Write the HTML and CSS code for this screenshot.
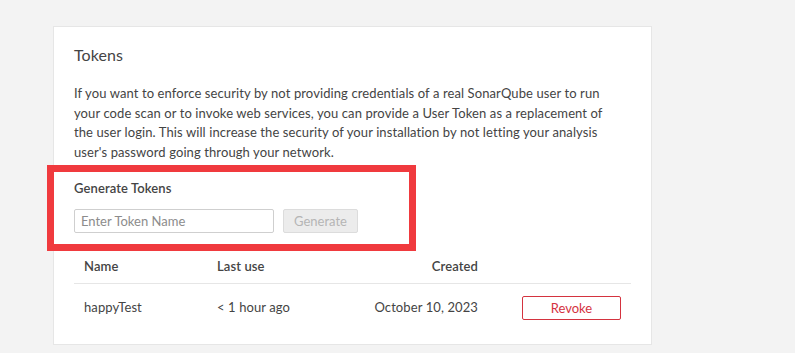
FILE: index.html
```html
<!DOCTYPE html>
<html lang="en">
<head>
    <meta charset="UTF-8">
    <meta name="viewport" content="width=device-width, initial-scale=1.0">
    <title>Tokens</title>
    <link rel="stylesheet" href="styles.css">
</head>
<body>

<div id="tokens-card">
    <h2 class="card-title">Tokens</h2>
    <p class="card-text">If you want to enforce security by not providing credentials of a real SonarQube user to run your code scan or to invoke web services, you can provide a User Token as a replacement of the user login. This will increase the security of your installation by not letting your analysis user's password going through your network.</p>

    <div id="generate-section">
        <h3 class="section-title">Generate Tokens</h3>
        <form class="generate-form">
            <input type="text" class="token-input" placeholder="Enter Token Name">
            <button type="button" class="generate-button" disabled>Generate</button>
        </form>
        <div class="highlight-box"></div>
    </div>

    <div class="token-table">
        <div class="token-row token-head">
            <div class="cell">Name</div>
            <div class="cell">Last use</div>
            <div class="cell cell-right">Created</div>
            <div class="cell"></div>
        </div>
        <div class="token-row">
            <div class="cell">happyTest</div>
            <div class="cell">&lt; 1 hour ago</div>
            <div class="cell cell-right">October 10, 2023</div>
            <div class="cell cell-right"><button class="revoke-button">Revoke</button></div>
        </div>
    </div>
</div>

</body>
</html>
```

FILE: styles.css
```css
body {
    margin: 0;
    padding: 26px 0 0 53px;
    background-color: #f3f3f3;
    font-family: Lato, "Noto Sans", sans-serif;
    font-size: 13px;
    line-height: 19.5px;
    letter-spacing: 0.1px;
    color: #444;
}

#tokens-card {
    width: 557px;
    padding: 16px 20px 12px;
    background-color: #fff;
    border: 1px solid #e6e6e6;
}

.card-title {
    margin: 0 0 17px;
    font-size: 16px;
    line-height: 24px;
    font-weight: normal;
}

.card-text {
    margin: 0 0 17px;
    padding-right: 10px;
}

#generate-section {
    position: relative;
}

.section-title {
    margin: 0 0 10px;
    font-size: 13px;
    line-height: 19.5px;
    font-weight: 600;
}

.generate-form {
    display: flex;
    gap: 9px;
}

.token-input {
    box-sizing: border-box;
    width: 200px;
    height: 24px;
    margin: 0;
    padding: 0 6px;
    border: 1px solid #cfcfcf;
    border-radius: 2px;
    font-family: inherit;
    font-size: 13px;
    color: #444;
}

.token-input::placeholder {
    color: #8c8c8c;
}

.generate-button {
    box-sizing: border-box;
    width: 75px;
    height: 24px;
    padding: 0;
    background-color: #ececec;
    border: 1px solid #dcdcdc;
    border-radius: 2px;
    font-family: inherit;
    font-size: 13px;
    color: #b5b5b5;
}

/* red annotation frame from the screenshot */
.highlight-box {
    position: absolute;
    left: -27px;
    top: -14px;
    width: 355px;
    height: 72px;
    border: 7px solid #f03a3e;
}

.token-table {
    margin-top: 16px;
}

.token-row {
    display: grid;
    grid-template-columns: 133px 140px 141px 143px;
    align-items: center;
}

.token-head {
    border-bottom: 1px solid #e6e6e6;
    font-weight: 600;
}

.token-head .cell {
    padding: 8px 10px 7px;
}

.cell {
    padding: 12px 10px;
}

.cell-right {
    text-align: right;
}

.revoke-button {
    box-sizing: border-box;
    width: 99px;
    height: 24px;
    padding: 0;
    background-color: #fff;
    border: 1px solid #d4333f;
    border-radius: 2px;
    font-family: inherit;
    font-size: 13px;
    color: #d4333f;
    vertical-align: middle;
}
```
